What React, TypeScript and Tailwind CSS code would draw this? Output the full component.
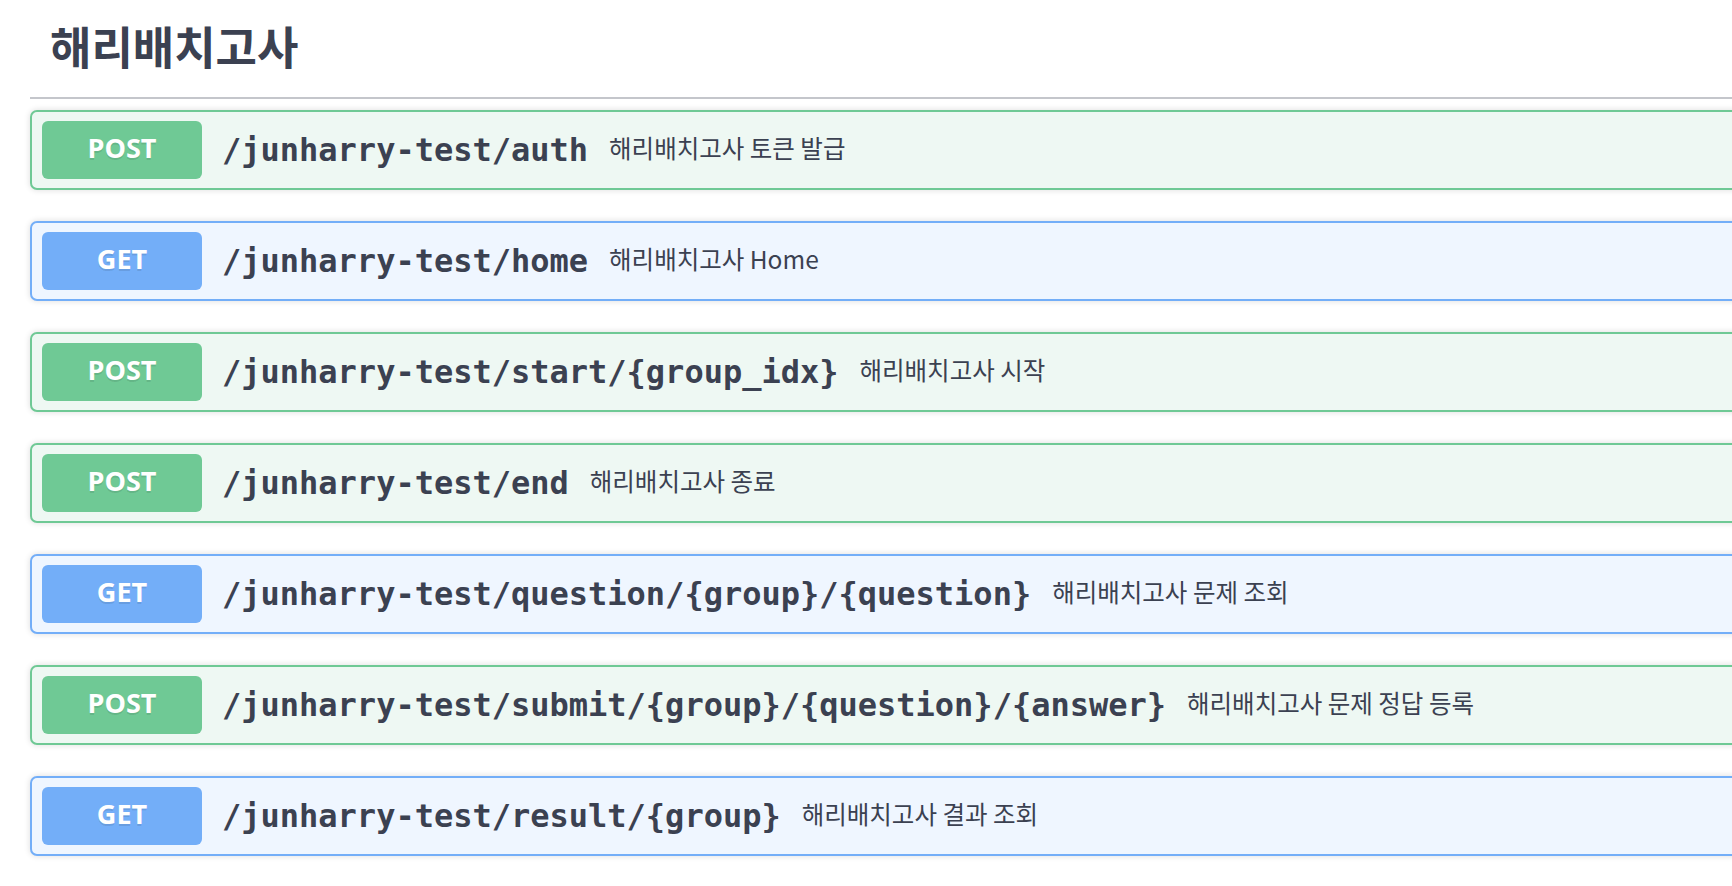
import React from 'react';

type Op = { method: 'GET' | 'POST'; path: string; summary: string };

const ops: Op[] = [
  { method: 'POST', path: '/junharry-test/auth', summary: '해리배치고사 토큰 발급' },
  { method: 'GET', path: '/junharry-test/home', summary: '해리배치고사 Home' },
  { method: 'POST', path: '/junharry-test/start/{group_idx}', summary: '해리배치고사 시작' },
  { method: 'POST', path: '/junharry-test/end', summary: '해리배치고사 종료' },
  { method: 'GET', path: '/junharry-test/question/{group}/{question}', summary: '해리배치고사 문제 조회' },
  { method: 'POST', path: '/junharry-test/submit/{group}/{question}/{answer}', summary: '해리배치고사 문제 정답 등록' },
  { method: 'GET', path: '/junharry-test/result/{group}', summary: '해리배치고사 결과 조회' },
];

const OpBlock: React.FC<{ op: Op }> = ({ op }) => {
  const isPost = op.method === 'POST';
  return (
    <div
      className={`flex items-center h-[80px] px-[10px] border-2 rounded-[7px] shadow-[0_0_6px_rgba(0,0,0,0.14)] ${
        isPost ? 'bg-[#eef8f3] border-[#6fc995]' : 'bg-[#eff6ff] border-[#73aef8]'
      }`}
    >
      <div
        className={`w-[160px] h-[58px] pb-[4px] rounded-[6px] flex items-center justify-center text-white font-bold text-[27px] [text-shadow:0_2px_0_rgba(0,0,0,0.1)] ${
          isPost ? 'bg-[#6fc995]' : 'bg-[#73aef8]'
        }`}
        style={{ fontFamily: '"Open Sans", "Noto Sans", sans-serif' }}
      >
        {op.method}
      </div>
      <span
        className="pl-[20px] pr-[21px] text-[32px] font-bold text-[#3b4151] leading-none"
        style={{ fontFamily: '"DejaVu Sans Mono", monospace' }}
      >
        {op.path}
      </span>
      <span
        className="text-[24.5px] text-[#3b4151] leading-none -mt-[4px]"
        style={{ fontFamily: '"Noto Sans CJK KR", "Noto Sans", sans-serif' }}
      >
        {op.summary}
      </span>
    </div>
  );
};

export default function App() {
  return (
    <div className="w-full min-h-[886px] bg-white overflow-hidden">
      <div className="w-[1800px] pl-[30px]">
        <div className="h-[99px] pt-[20px] pl-[20px] border-b-2 border-[#c4c6cb]">
          <h3
            className="text-[45px] font-bold text-[#3b4151] leading-[52px]"
            style={{ fontFamily: '"Noto Sans CJK KR", "Noto Sans", sans-serif' }}
          >
            해리배치고사
          </h3>
        </div>
        <div className="mt-[11px] flex flex-col gap-[31px]">
          {ops.map((op) => (
            <OpBlock key={op.path} op={op} />
          ))}
        </div>
      </div>
    </div>
  );
}
